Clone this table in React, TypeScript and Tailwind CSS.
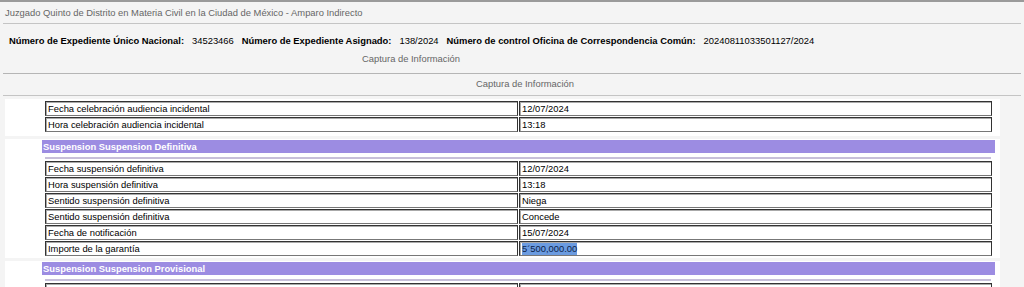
import React from 'react';

type Field = { label: string; value: string; selected?: boolean };

const incidental: Field[] = [
    { label: 'Fecha celebración audiencia incidental', value: '12/07/2024' },
    { label: 'Hora celebración audiencia incidental', value: '13:18' },
];

const definitiva: Field[] = [
    { label: 'Fecha suspensión definitiva', value: '12/07/2024' },
    { label: 'Hora suspensión definitiva', value: '13:18' },
    { label: 'Sentido suspensión definitiva', value: 'Niega' },
    { label: 'Sentido suspensión definitiva', value: 'Concede' },
    { label: 'Fecha de notificación', value: '15/07/2024' },
    { label: 'Importe de la garantía', value: '5´500,000.00', selected: true },
];

const provisional: Field[] = [
    { label: 'Fecha suspensión provisional', value: '04/07/2024' },
];

const Cell: React.FC<{ children: React.ReactNode }> = ({ children }) => (
    <div className="w-[473px] h-[15px] bg-white border border-[#333] border-b-[#777] shadow-[inset_1px_1px_0_#aaa] pl-[2px] flex items-center text-[9.4px] leading-none text-black whitespace-nowrap overflow-hidden">
        {children}
    </div>
);

const Rows: React.FC<{ fields: Field[] }> = ({ fields }) => (
    <div className="flex flex-col gap-[1px]">
        {fields.map((f, i) => (
            <div key={i} className="flex gap-[1px]">
                <Cell>{f.label}</Cell>
                <Cell>
                    {f.selected ? <span className="bg-[#6b9be0] text-[#0b1f4a] leading-[12px]">{f.value}</span> : f.value}
                </Cell>
            </div>
        ))}
    </div>
);

const SectionHeader: React.FC<{ title: string }> = ({ title }) => (
    <div>
        <div className="ml-[37px] w-[953px] h-[13px] bg-[#9c8ce2] pl-[1px] flex items-center text-[9.4px] font-bold text-white leading-none">
            {title}
        </div>
        <div className="ml-[40px] w-[946px] h-[2px] mt-[4px] bg-[#c7bfd9]" />
    </div>
);

const App: React.FC = () => {
    return (
        <div className="w-[1024px] h-[287px] overflow-hidden bg-[#f4f4f4] border-t-2 border-[#9a9a9a] font-['Liberation_Sans',Arial,sans-serif]">
            <div className="h-[21px] pl-[5px] pt-[5px] text-[9.4px] leading-[12px] text-[#666]">
                Juzgado Quinto de Distrito en Materia Civil en la Ciudad de México - Amparo Indirecto
            </div>
            <div className="mx-[3px] border-b border-[#c4c4c4]" />

            <div className="pl-[9px] pt-[11px] h-[27px] text-[9.4px] leading-[12px] text-black whitespace-nowrap">
                <span className="font-bold">Número de Expediente Único Nacional:</span>
                <span className="ml-[8px]">34523466</span>
                <span className="ml-[8px] font-bold">Número de Expediente Asignado:</span>
                <span className="ml-[8px]">138/2024</span>
                <span className="ml-[8px] font-bold">Número de control Oficina de Correspondencia Común:</span>
                <span className="ml-[8px]">20240811033501127/2024</span>
            </div>
            <div className="w-[822px] h-[22px] pt-[2px] text-center text-[9.4px] leading-[12px] text-[#666]">
                Captura de Información
            </div>
            <div className="mx-[3px] border-b border-[#b5b5b5]" />
            <div className="h-[21px] pl-[26px] pt-[4px] text-center text-[9.4px] leading-[12px] text-[#666]">
                Captura de Información
            </div>
            <div className="mx-[3px] border-b border-[#c4c4c4]" />

            <div className="mt-[3px] ml-[5px] w-[995px] bg-white pt-[2px] pb-[4px] pl-[40px]">
                <Rows fields={incidental} />
            </div>

            <div className="mt-[3px] ml-[5px] w-[995px] bg-white pt-[1px] pb-[2px]">
                <SectionHeader title="Suspension Suspension Definitiva" />
                <div className="pl-[40px] mt-[2px]">
                    <Rows fields={definitiva} />
                </div>
            </div>

            <div className="mt-[3px] ml-[5px] w-[995px] bg-white pt-[1px] pb-[3px]">
                <SectionHeader title="Suspension Suspension Provisional" />
                <div className="pl-[40px] mt-[2px]">
                    <Rows fields={provisional} />
                </div>
            </div>
        </div>
    );
};

export default App;
